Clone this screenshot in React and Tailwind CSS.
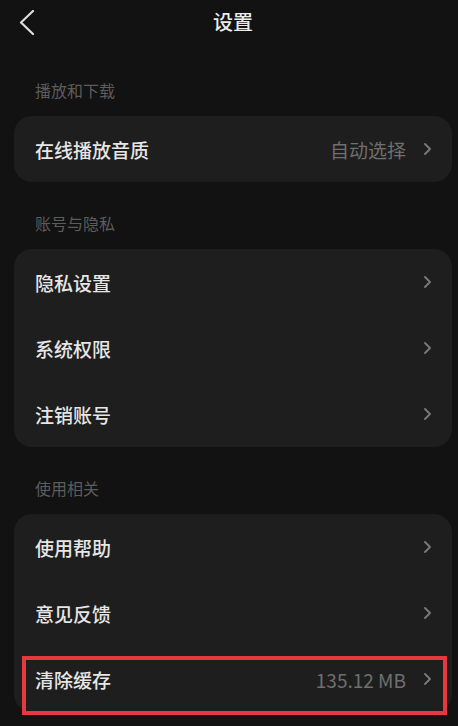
import React from "react"

const font = { fontFamily: '"Noto Sans CJK SC", "Noto Sans", sans-serif' }

const sections = [
    {
        title: "播放和下载",
        items: [{ label: "在线播放音质", value: "自动选择" }],
    },
    {
        title: "账号与隐私",
        items: [{ label: "隐私设置" }, { label: "系统权限" }, { label: "注销账号" }],
    },
    {
        title: "使用相关",
        items: [
            { label: "使用帮助" },
            { label: "意见反馈" },
            { label: "清除缓存", value: "135.12 MB", highlight: true },
        ],
    },
]

function Chevron() {
    return (
        <svg width="9" height="12" viewBox="0 0 9 12" fill="none" className="shrink-0">
            <path d="M2 1 L7 6 L2 11" stroke="#7a7a7a" strokeWidth="1.8" strokeLinecap="round" strokeLinejoin="round" />
        </svg>
    )
}

function Row({ item }) {
    return (
        <div className="relative flex h-[66px] items-center justify-between pl-[21px] pr-[20px]">
            <span className="text-[19px] font-medium leading-none text-[#e6e6e6]">{item.label}</span>
            <div className="flex items-center gap-[17px]">
                {item.value && <span className="text-[19px] leading-none text-[#6f6f6f]">{item.value}</span>}
                <Chevron />
            </div>
            {item.highlight && (
                <div className="pointer-events-none absolute left-[8px] right-[5px] top-[10px] bottom-[-3px] border-4 border-[#e5393f]" />
            )}
        </div>
    )
}

export default function App() {
    return (
        <div className="min-h-[726px] w-[458px] bg-[#121212] pb-6" style={font}>
            <div className="relative flex h-[44px] items-center justify-center pl-[8px]">
                <svg width="16" height="26" viewBox="0 0 16 26" fill="none" className="absolute left-[19px] top-[10px]">
                    <path d="M14 1 L2 12.5 L14 24" stroke="#dedede" strokeWidth="2.2" strokeLinecap="round" strokeLinejoin="round" />
                </svg>
                <span className="text-[20px] font-medium text-[#ececec]">设置</span>
            </div>

            <div className="flex flex-col gap-[29px] pt-[34px]">
                {sections.map((section) => (
                    <div key={section.title}>
                        <div className="mb-[14px] pl-[35px] text-[16px] leading-[24px] text-[#5c5c5c]">{section.title}</div>
                        <div className="ml-[14px] mr-[6px] rounded-[18px] bg-[#1e1e1e]">
                            {section.items.map((item) => (
                                <Row key={item.label} item={item} />
                            ))}
                        </div>
                    </div>
                ))}
            </div>
        </div>
    )
}
